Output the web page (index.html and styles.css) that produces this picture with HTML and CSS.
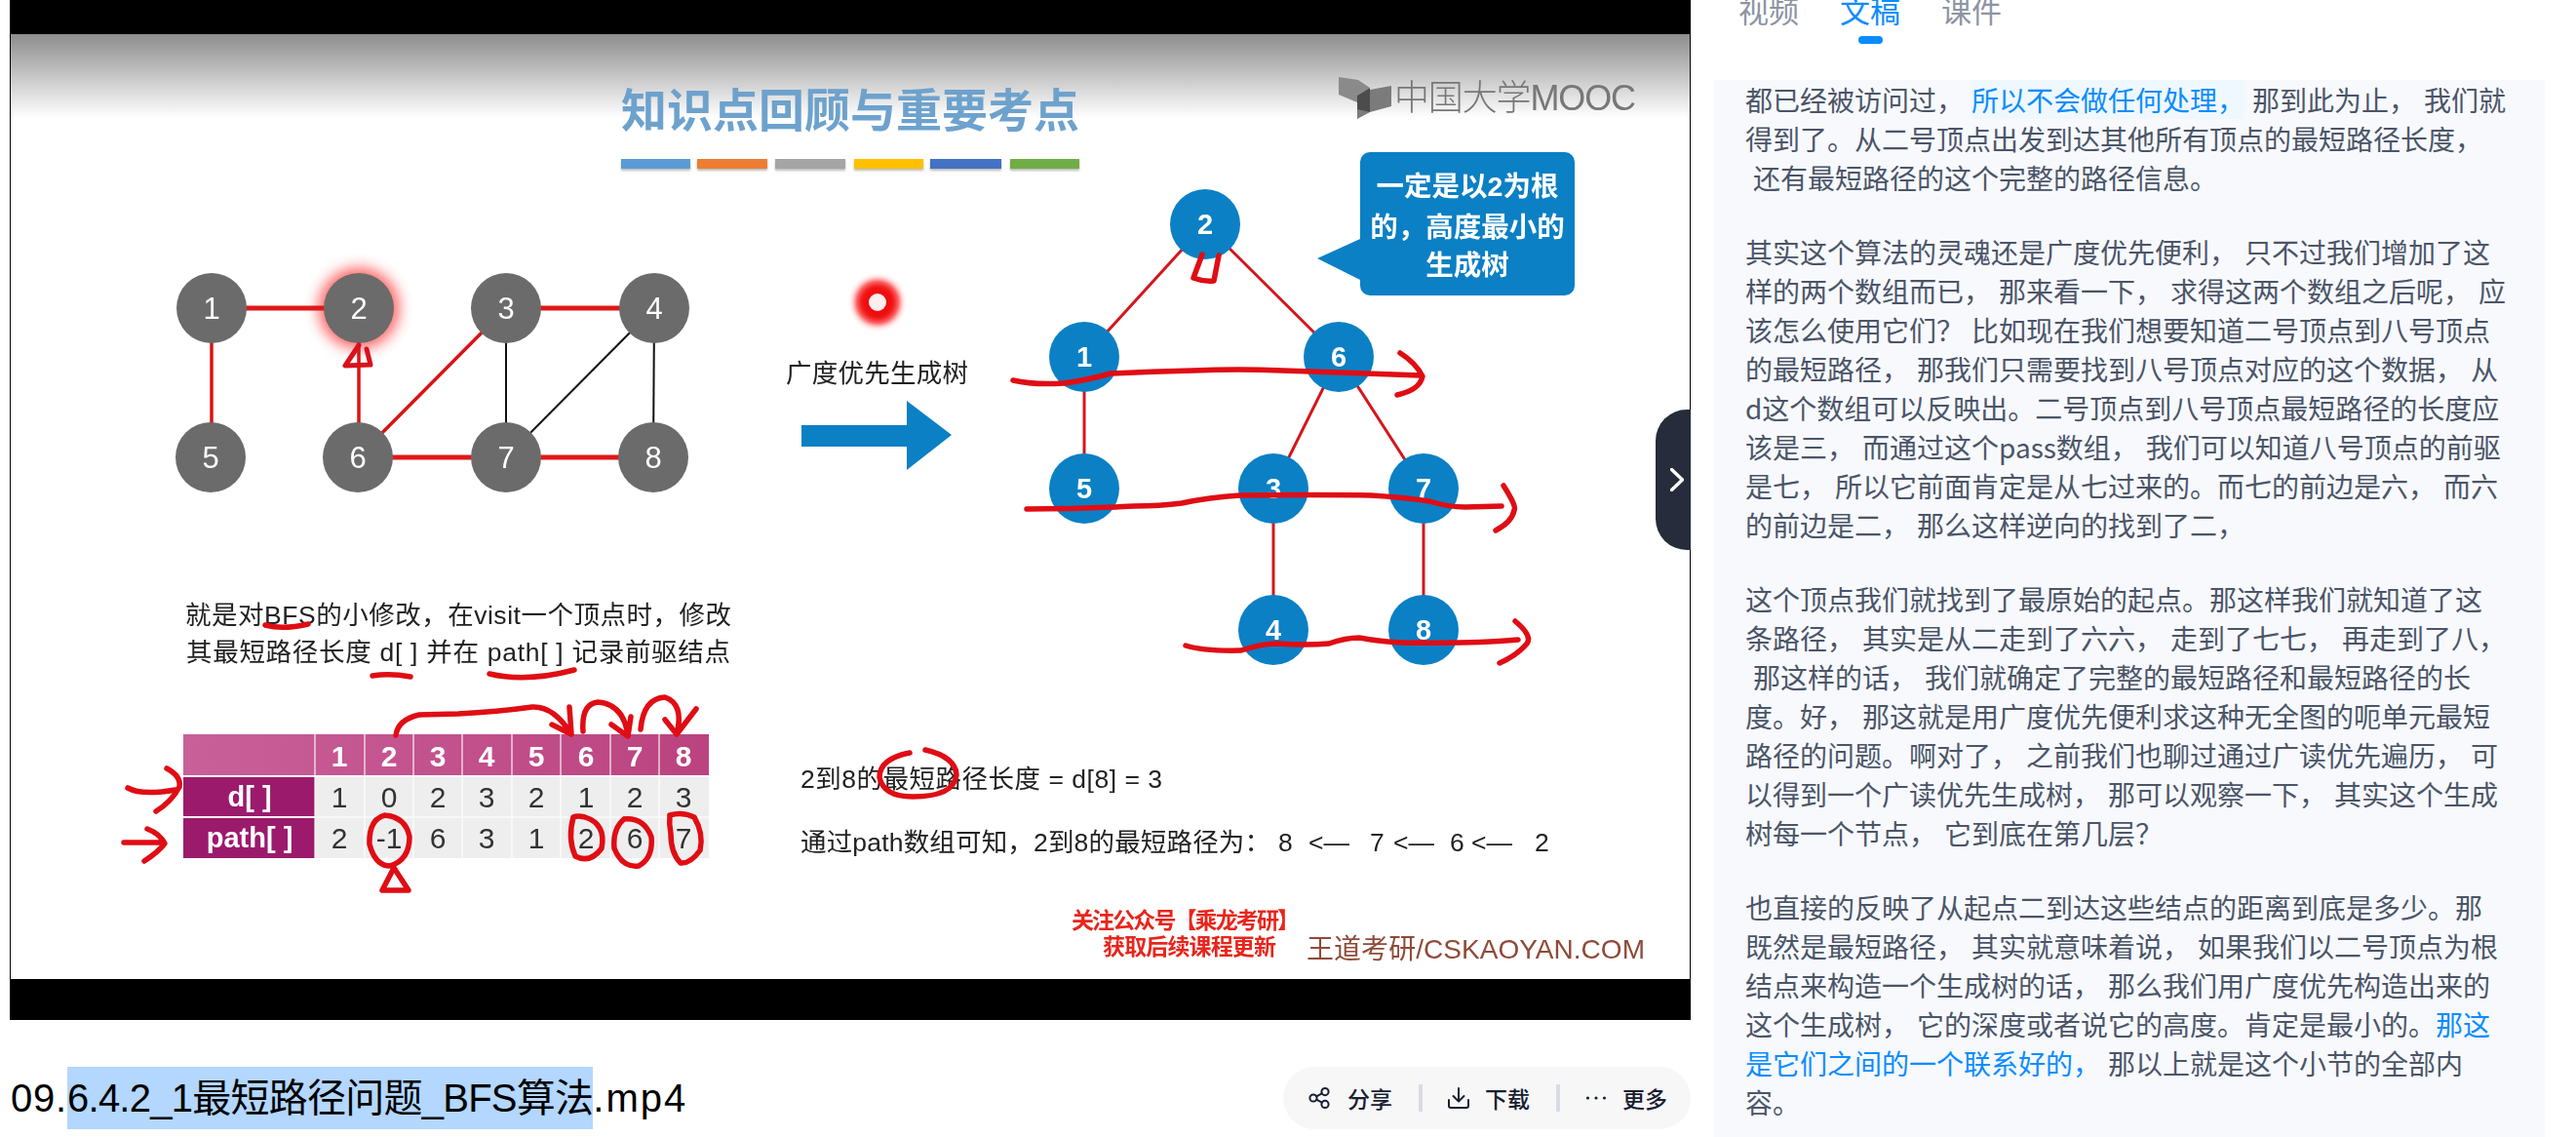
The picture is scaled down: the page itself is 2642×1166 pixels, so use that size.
FILE: index.html
```html
<!DOCTYPE html>
<html lang="zh-CN">
<head>
<meta charset="utf-8">
<title>09.6.4.2_1最短路径问题_BFS算法.mp4</title>
<link rel="stylesheet" href="styles.css">
</head>
<body>
<div class="page">
  <main class="main">
    <div class="player">
      <svg class="slide" viewBox="10 0 1724 1046" width="1724" height="1046" xmlns="http://www.w3.org/2000/svg">
        <defs>
          <linearGradient id="fade" x1="0" y1="0" x2="0" y2="1">
            <stop offset="0" stop-color="#8d8d8d"/>
            <stop offset="1" stop-color="#ffffff"/>
          </linearGradient>
          <linearGradient id="head" x1="0" y1="0" x2="1" y2="0">
            <stop offset="0" stop-color="#c9609a"/>
            <stop offset="1" stop-color="#bb437f"/>
          </linearGradient>
          <filter id="glow" x="-60%" y="-60%" width="220%" height="220%"><feGaussianBlur stdDeviation="7"/></filter>
          <filter id="soft" x="-40%" y="-40%" width="180%" height="180%"><feGaussianBlur stdDeviation="3"/></filter>
        </defs>
        <rect class="black" x="10" y="0" width="1724" height="1046"/>
        <rect class="paper" x="11" y="35" width="1722" height="969"/>
        <rect x="11" y="35" width="1722" height="86" fill="url(#fade)"/>
        <g class="art">
          <!-- heading -->
          <text class="heading" x="637" y="130">知识点回顾与重要考点</text>
          <g class="bars">
            <rect class="b1" x="637" y="163" width="71" height="10"/>
            <rect class="b2" x="715" y="163" width="72" height="10"/>
            <rect class="b3" x="795" y="163" width="72" height="10"/>
            <rect class="b4" x="876" y="163" width="71" height="10"/>
            <rect class="b5" x="954" y="163" width="73" height="10"/>
            <rect class="b6" x="1036" y="163" width="71" height="10"/>
          </g>

          <!-- MOOC logo -->
          <polygon class="logo-a" points="1373,79 1393,82 1405,90 1392,98 1392,105 1373,97"/>
          <polygon class="logo-b" points="1405,92 1427,88 1427,109 1405,115 1392,122 1392,98"/>
          <polygon class="logo-c" points="1392,98 1405,90 1405,115 1392,112"/>
          <text class="logo-text" x="1430" y="113" textLength="248">中国大学MOOC</text>

          <!-- source graph -->
          <circle class="halo" cx="368" cy="316" r="42" filter="url(#glow)"/>
          <line class="edge-k" x1="519" y1="316" x2="519" y2="469"/>
          <line class="edge-k" x1="671" y1="316" x2="519" y2="469"/>
          <line class="edge-k" x1="671" y1="316" x2="670" y2="469"/>
          <line class="edge-r" x1="217" y1="316" x2="368" y2="316"/>
          <line class="edge-r" x1="519" y1="316" x2="671" y2="316"/>
          <line class="edge-r" x1="367" y1="469" x2="519" y2="469"/>
          <line class="edge-r" x1="519" y1="469" x2="670" y2="469"/>
          <line class="edge-rs" x1="217" y1="316" x2="217" y2="469"/>
          <line class="edge-rs" x1="368" y1="316" x2="368" y2="469"/>
          <line class="edge-rs" x1="519" y1="316" x2="367" y2="469"/>
          <circle class="gnode" cx="217" cy="316" r="36"/>
          <circle class="gnode" cx="368" cy="316" r="36"/>
          <circle class="gnode" cx="519" cy="316" r="36"/>
          <circle class="gnode" cx="671" cy="316" r="36"/>
          <circle class="gnode" cx="216" cy="469" r="36"/>
          <circle class="gnode" cx="367" cy="469" r="36"/>
          <circle class="gnode" cx="519" cy="469" r="36"/>
          <circle class="gnode" cx="670" cy="469" r="36"/>
          <text class="gnum" x="217" y="327">1</text>
          <text class="gnum" x="368" y="327">2</text>
          <text class="gnum" x="519" y="327">3</text>
          <text class="gnum" x="671" y="327">4</text>
          <text class="gnum" x="216" y="480">5</text>
          <text class="gnum" x="367" y="480">6</text>
          <text class="gnum" x="519" y="480">7</text>
          <text class="gnum" x="670" y="480">8</text>
          <path class="ink" d="M368 354 L354 375 L380 374 L376 358"/>

          <!-- pointer and arrow -->
          <circle class="pointer-halo" cx="900" cy="310" r="24" filter="url(#soft)"/>
          <circle class="pointer-ring" cx="900" cy="310" r="20" filter="url(#soft)"/>
          <circle class="pointer-dot" cx="900" cy="310" r="9"/>
          <text class="label" x="806" y="392" textLength="187">广度优先生成树</text>
          <polygon class="blue" points="822,436 930,436 930,411 976,446 930,482 930,458 822,458"/>

          <!-- tree -->
          <line class="edge-t" x1="1236" y1="230" x2="1112" y2="366"/>
          <line class="edge-t" x1="1236" y1="230" x2="1373" y2="366"/>
          <line class="edge-t" x1="1112" y1="366" x2="1112" y2="501"/>
          <line class="edge-t" x1="1373" y1="366" x2="1306" y2="501"/>
          <line class="edge-t" x1="1373" y1="366" x2="1460" y2="501"/>
          <line class="edge-t" x1="1306" y1="501" x2="1306" y2="646"/>
          <line class="edge-t" x1="1460" y1="501" x2="1460" y2="646"/>
          <circle class="blue" cx="1236" cy="230" r="36"/>
          <circle class="blue" cx="1112" cy="366" r="36"/>
          <circle class="blue" cx="1373" cy="366" r="36"/>
          <circle class="blue" cx="1112" cy="501" r="36"/>
          <circle class="blue" cx="1306" cy="501" r="36"/>
          <circle class="blue" cx="1460" cy="501" r="36"/>
          <circle class="blue" cx="1306" cy="646" r="36"/>
          <circle class="blue" cx="1460" cy="646" r="36"/>
          <text class="tnum" x="1236" y="240">2</text>
          <text class="tnum" x="1112" y="376">1</text>
          <text class="tnum" x="1373" y="376">6</text>
          <text class="tnum" x="1112" y="511">5</text>
          <text class="tnum" x="1306" y="511">3</text>
          <text class="tnum" x="1460" y="511">7</text>
          <text class="tnum" x="1306" y="656">4</text>
          <text class="tnum" x="1460" y="656">8</text>

          <!-- callout -->
          <path class="blue" d="M1405 156 H1605 a10 10 0 0 1 10 10 V293 a10 10 0 0 1 -10 10 H1405 a10 10 0 0 1 -10 -10 V287 L1351 265 L1395 245 V166 a10 10 0 0 1 10 -10 Z"/>
          <text class="callout" x="1505" y="201">一定是以2为根</text>
          <text class="callout" x="1505" y="243">的&#65292;高度最小的</text>
          <text class="callout" x="1505" y="282">生成树</text>

          <!-- explanation -->
          <text class="label" x="190" y="640" textLength="560">就是对BFS的小修改&#65292;在visit一个顶点时&#65292;修改</text>
          <text class="label" x="191" y="678" textLength="558">其最短路径长度 d[ ] 并在 path[ ] 记录前驱结点</text>

          <!-- table -->
          <rect x="188" y="753" width="539" height="42" fill="url(#head)"/>
          <rect class="cell" x="323" y="797" width="404" height="83"/>
          <rect class="rowhead" x="188" y="797" width="135" height="40"/>
          <rect class="rowhead" x="188" y="839" width="135" height="41"/>
          <path class="grid" d="M323 753 V880 M374 753 V880 M424 753 V880 M474 753 V880 M525 753 V880 M575 753 V880 M626 753 V880 M676 753 V880 M323 838 H727"/>
          <text class="thead" x="348" y="786">1</text>
          <text class="thead" x="399" y="786">2</text>
          <text class="thead" x="449" y="786">3</text>
          <text class="thead" x="499" y="786">4</text>
          <text class="thead" x="550" y="786">5</text>
          <text class="thead" x="601" y="786">6</text>
          <text class="thead" x="651" y="786">7</text>
          <text class="thead" x="701" y="786">8</text>
          <text class="trow" x="256" y="827">d[ ]</text>
          <text class="trow" x="256" y="869">path[ ]</text>
          <text class="tcell" x="348" y="828">1</text>
          <text class="tcell" x="399" y="828">0</text>
          <text class="tcell" x="449" y="828">2</text>
          <text class="tcell" x="499" y="828">3</text>
          <text class="tcell" x="550" y="828">2</text>
          <text class="tcell" x="601" y="828">1</text>
          <text class="tcell" x="651" y="828">2</text>
          <text class="tcell" x="701" y="828">3</text>
          <text class="tcell" x="348" y="870">2</text>
          <text class="tcell" x="399" y="870">-1</text>
          <text class="tcell" x="449" y="870">6</text>
          <text class="tcell" x="499" y="870">3</text>
          <text class="tcell" x="550" y="870">1</text>
          <text class="tcell" x="601" y="870">2</text>
          <text class="tcell" x="651" y="870">6</text>
          <text class="tcell" x="701" y="870">7</text>

          <!-- result lines -->
          <text class="label" x="821" y="808" textLength="371">2到8的最短路径长度 = d[8] = 3</text>
          <text class="label" y="873"><tspan x="821" textLength="482">通过path数组可知&#65292;2到8的最短路径为&#65306;</tspan><tspan x="1311">8</tspan><tspan x="1342">&lt;—</tspan><tspan x="1405">7</tspan><tspan x="1429">&lt;—</tspan><tspan x="1487">6</tspan><tspan x="1509">&lt;—</tspan><tspan x="1574">2</tspan></text>

          <!-- footer notice -->
          <text class="notice" x="1099" y="952" textLength="234">关注公众号【乘龙考研】</text>
          <text class="notice" x="1131" y="979" textLength="178">获取后续课程更新</text>
          <text class="brand" x="1340" y="983" textLength="347">王道考研/CSKAOYAN.COM</text>

          <!-- handwritten marks -->
          <path class="pen" d="M1233 261 L1224 285 Q1234 289 1245 288 L1250 262"/>
          <path class="pen" d="M1039 390 Q1060 395 1091 393 Q1115 390 1139 383 Q1180 381 1224 380 Q1270 378 1315 380 L1457 385 M1436 362 Q1452 372 1459 386 Q1456 400 1433 405"/>
          <path class="pen" d="M1053 522 Q1110 522 1163 519 Q1190 519 1212 516 Q1240 510 1272 508 Q1340 507 1406 508 Q1440 510 1466 514 Q1485 520 1503 520 L1540 519 M1542 498 Q1556 520 1553 523 Q1551 535 1534 544"/>
          <path class="pen" d="M1216 662 Q1235 668 1273 667 Q1295 660 1309 660 Q1340 662 1363 660 Q1380 654 1394 654 Q1425 660 1454 659 Q1510 660 1557 656 M1554 637 Q1572 652 1566 660 Q1556 672 1538 680"/>
          <path class="pen" d="M272 641 Q290 646 316 640 M382 693 Q400 690 421 694 M502 691 Q540 700 589 687"/>
          <path class="pen" d="M406 754 Q408 738 430 733 L470 732 Q510 730 546 725 Q568 724 586 753 M584 725 L586 753 L566 743"/>
          <path class="pen" d="M598 750 Q596 722 613 720 Q640 722 644 755 M627 743 L644 755 L647 735"/>
          <path class="pen" d="M657 748 Q660 716 682 715 Q702 722 694 753 M682 738 L694 753 L714 727"/>
          <path class="pen" d="M131 808 Q145 816 180 810 M171 788 Q186 796 184 807 Q176 822 160 832"/>
          <path class="pen" d="M127 864 L167 864 M151 850 Q164 855 169 865 Q162 874 148 883"/>
          <path class="pen" d="M395 836 Q378 840 379 866 Q385 888 400 888 Q420 882 420 858 Q416 838 395 836"/>
          <path class="pen" d="M588 838 Q582 860 590 878 Q605 886 617 870 Q622 845 600 838 Q592 836 588 838"/>
          <path class="pen" d="M640 840 Q628 850 630 870 Q638 890 655 888 Q670 880 668 858 Q660 838 640 840"/>
          <path class="pen" d="M687 836 Q700 832 712 838 Q722 855 718 872 Q708 886 698 885 Q688 875 688 855 Q686 845 687 836"/>
          <path class="pen" d="M404 890 L392 913 L419 913 Z"/>
          <path class="pen" d="M933 772 Q902 778 902 797 Q906 817 936 817 Q978 817 981 795 Q980 776 949 769"/>
        </g>
      </svg>
      <button class="collapse" type="button" aria-label="收起">
        <svg class="collapse-icon" viewBox="0 0 14 24" width="14" height="24" xmlns="http://www.w3.org/2000/svg"><path d="M1.5 1.5 L12.5 12 L1.5 22.5"/></svg>
      </button>
    </div>
    <div class="meta">
      <h1 class="file-title">09.<span class="selected">6.4.2_1最短路径问题_BFS算法</span><span class="ext">.mp4</span></h1>
      <div class="actions">
        <span class="action">
          <svg class="action-icon action-icon-share" viewBox="0 0 22 22" xmlns="http://www.w3.org/2000/svg"><circle cx="5" cy="11" r="3.6"/><circle cx="17" cy="4.6" r="3.6"/><circle cx="17" cy="17.4" r="3.6"/><path d="M8.2 9.3 L13.8 6.3 M8.2 12.7 L13.8 15.7"/></svg>
          分享
        </span>
        <i class="divider"></i>
        <span class="action">
          <svg class="action-icon" viewBox="0 0 22 22" xmlns="http://www.w3.org/2000/svg"><path d="M11 1 V14 M5.5 9 L11 14.5 L16.5 9 M1 13 V19 Q1 21 3 21 H19 Q21 21 21 19 V13"/></svg>
          下载
        </span>
        <i class="divider"></i>
        <span class="action">
          <svg class="action-icon" viewBox="0 0 22 22" xmlns="http://www.w3.org/2000/svg"><circle class="dot" cx="2.5" cy="11" r="1.6"/><circle class="dot" cx="11" cy="11" r="1.6"/><circle class="dot" cx="19.5" cy="11" r="1.6"/></svg>
          更多
        </span>
      </div>
    </div>
  </main>
  <aside class="side">
    <nav class="tabs">
      <a class="tab">视频</a>
      <a class="tab tab-active">文稿</a>
      <a class="tab">课件</a>
    </nav>
    <section class="transcript">
      <p>都已经被访问过&#65292; <span class="hl">所以不会做任何处理&#65292;</span> 那到此为止&#65292; 我们就<br>得到了。从二号顶点出发到达其他所有顶点的最短路径长度&#65292;<br>&#160;还有最短路径的这个完整的路径信息。</p>
      <p>其实这个算法的灵魂还是广度优先便利&#65292; 只不过我们增加了这<br>样的两个数组而已&#65292; 那来看一下&#65292; 求得这两个数组之后呢&#65292; 应<br>该怎么使用它们&#65311; 比如现在我们想要知道二号顶点到八号顶点<br>的最短路径&#65292; 那我们只需要找到八号顶点对应的这个数据&#65292; 从<br>d这个数组可以反映出。二号顶点到八号顶点最短路径的长度应<br>该是三&#65292; 而通过这个pass数组&#65292; 我们可以知道八号顶点的前驱<br>是七&#65292; 所以它前面肯定是从七过来的。而七的前边是六&#65292; 而六<br>的前边是二&#65292; 那么这样逆向的找到了二&#65292;</p>
      <p>这个顶点我们就找到了最原始的起点。那这样我们就知道了这<br>条路径&#65292; 其实是从二走到了六六&#65292; 走到了七七&#65292; 再走到了八&#65292;<br>&#160;那这样的话&#65292; 我们就确定了完整的最短路径和最短路径的长<br>度。好&#65292; 那这就是用广度优先便利求这种无全图的呃单元最短<br>路径的问题。啊对了&#65292; 之前我们也聊过通过广读优先遍历&#65292; 可<br>以得到一个广读优先生成树&#65292; 那可以观察一下&#65292; 其实这个生成<br>树每一个节点&#65292; 它到底在第几层&#65311;</p>
      <p>也直接的反映了从起点二到达这些结点的距离到底是多少。那<br>既然是最短路径&#65292; 其实就意味着说&#65292; 如果我们以二号顶点为根<br>结点来构造一个生成树的话&#65292; 那么我们用广度优先构造出来的<br>这个生成树&#65292; 它的深度或者说它的高度。肯定是最小的。<span class="link">那这<br>是它们之间的一个联系好的&#65292;</span> 那以上就是这个小节的全部内<br>容。</p>
    </section>
  </aside>
</div>
</body>
</html>
```

FILE: styles.css
```css
* { box-sizing: border-box; }
html, body { margin: 0; padding: 0; background: #fff; }
body { height: 1166px; overflow: hidden; font-family: "Liberation Sans", "Noto Sans CJK SC", sans-serif; }

.page { display: flex; height: 1166px; }
.main { width: 1734px; padding-left: 10px; flex: none; }
.player { position: relative; height: 1046px; }
.slide { display: block; }

.black { fill: #000; }
.paper { fill: #fff; }
.art { filter: blur(0.6px); }
.slide text { font-family: "Liberation Sans", "Noto Sans CJK SC", sans-serif; }

.heading { font-size: 47px; font-weight: 700; fill: #6da2cd; }
.bars { filter: drop-shadow(0 2px 1px #bbb); }
.b1 { fill: #5b9bd5; } .b2 { fill: #ed7d31; } .b3 { fill: #a5a5a5; }
.b4 { fill: #ffc000; } .b5 { fill: #4472c4; } .b6 { fill: #70ad47; }
.logo-a { fill: #8a8a8a; } .logo-b { fill: #7b7b7b; } .logo-c { fill: #4c4c4c; }
.logo-text { font-size: 36px; font-weight: 300; fill: #777; }

.halo { fill: #ff3b3b; opacity: .75; }
.edge-k { stroke: #111; stroke-width: 2px; }
.edge-r { stroke: #e01818; stroke-width: 5px; }
.edge-rs { stroke: #d81414; stroke-width: 3.5px; }
.edge-t { stroke: #d4161c; stroke-width: 3px; }
.gnode { fill: #6b6b6b; }
.gnum { font-size: 31px; fill: #fff; text-anchor: middle; }
.tnum { font-size: 29px; font-weight: 700; fill: #fff; text-anchor: middle; }
.blue { fill: #0b80c4; }

.pointer-halo { fill: #ff2020; opacity: .6; }
.pointer-ring { fill: #f01010; }
.pointer-dot { fill: #ffeeee; }

.ink { fill: none; stroke: #d8121c; stroke-width: 5px; stroke-linejoin: round; stroke-linecap: round; }
.pen { fill: none; stroke: #e00d14; stroke-width: 5.5px; stroke-linecap: round; stroke-linejoin: round; }

.label { font-size: 26.5px; fill: #222; }
.callout { font-size: 28.5px; font-weight: 700; fill: #fff; text-anchor: middle; }

.cell { fill: #eeeeee; }
.rowhead { fill: #9c1a6c; }
.grid { fill: none; stroke: #fff; stroke-width: 1.5px; opacity: .75; }
.thead { font-size: 30px; font-weight: 700; fill: #fff; text-anchor: middle; }
.trow { font-size: 29px; font-weight: 700; fill: #fff; text-anchor: middle; }
.tcell { font-size: 30px; fill: #333; text-anchor: middle; }

.notice { font-size: 23px; font-weight: 700; fill: #e8251b; }
.brand { font-size: 28px; fill: #8f4a38; }

.collapse {
  position: absolute;
  right: 0;
  top: 420px;
  width: 36px;
  height: 144px;
  padding: 0 0 0 8px;
  border: 0;
  border-radius: 32px 0 0 32px;
  background: #262c3b;
  display: flex;
  align-items: center;
  justify-content: center;
}
.collapse-icon { fill: none; stroke: #fff; stroke-width: 3.4px; stroke-linecap: round; stroke-linejoin: round; }

.meta { display: flex; align-items: center; justify-content: space-between; margin-top: 48px; height: 64px; }
.file-title { margin: 0; font-size: 40px; font-weight: 400; line-height: 64px; letter-spacing: .8px; color: #000; white-space: nowrap; padding-left: 1px; }
.selected { display: inline-block; background: #b3d7ff; line-height: 64px; letter-spacing: -.75px; }
.ext { letter-spacing: 2px; }

.actions { display: flex; align-items: center; gap: 26.5px; width: 418px; height: 64px; padding-left: 26px; border-radius: 32px; background: #f7f7f8; }
.action { display: flex; align-items: center; gap: 16px; font-size: 23px; font-weight: 500; color: #182030; font-family: "Noto Sans CJK SC", sans-serif; white-space: nowrap; }
.action-icon { width: 22px; height: 22px; fill: none; stroke: #182030; stroke-width: 2px; stroke-linecap: round; stroke-linejoin: round; flex: none; }
.action-icon-share { margin-right: 2px; }
.dot { fill: #182030; stroke: none; }
.divider { width: 4px; height: 28px; background: #d9dce4; flex: none; }

.side { width: 852px; margin-left: 24px; flex: none; height: 1166px; overflow: hidden; }
.tabs { display: flex; gap: 42px; height: 82px; padding-left: 25px; }
.tab { position: relative; height: 31px; margin-top: -6px; font-size: 31px; line-height: 31px; color: #8d94a3; font-family: "Noto Sans CJK SC", sans-serif; }
.tab-active { color: #0a8cff; }
.tab-active::after { content: ""; position: absolute; left: 19px; top: 43px; width: 25px; height: 8px; border-radius: 4px; background: #0a8cff; }

.transcript { height: 1084px; padding: 0 32px; background: #f7f9fd; font-family: "Noto Sans CJK SC", sans-serif; font-size: 28px; line-height: 40px; word-spacing: 1.7px; color: #4b5568; white-space: nowrap; }
.transcript p { margin: 0 0 36px; }
.hl { color: #0a8cff; background: #f0f8ff; }
.link { color: #0a8cff; }
```
